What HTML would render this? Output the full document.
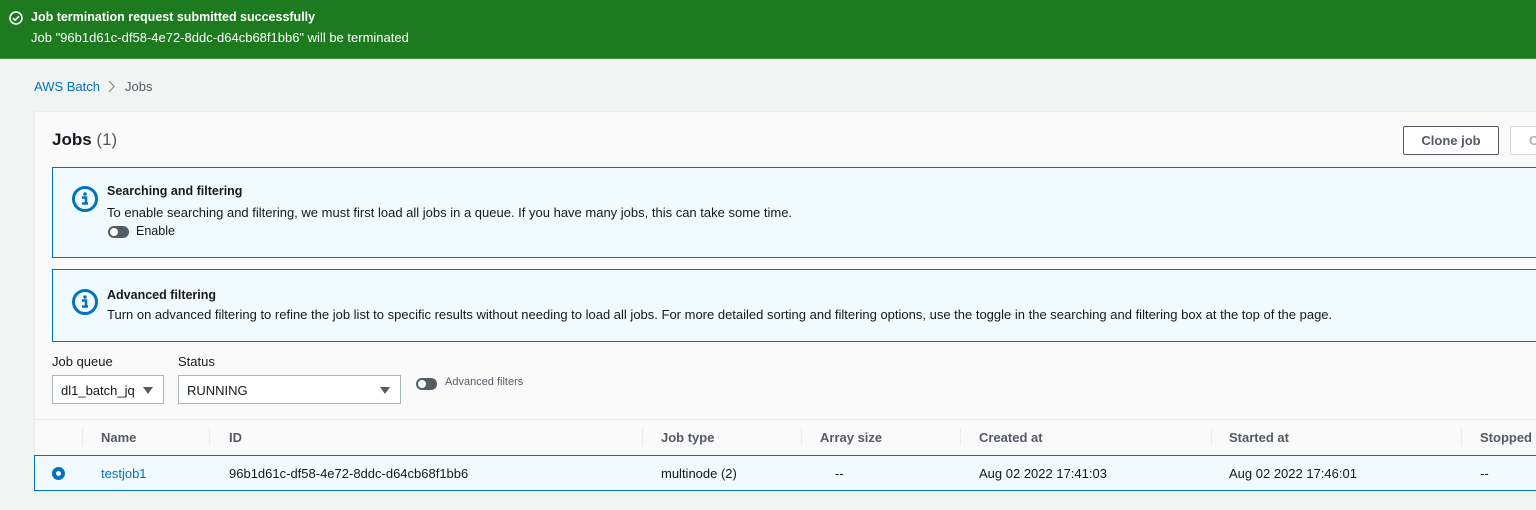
<!DOCTYPE html>
<html><head><meta charset="utf-8"><style>
*{box-sizing:border-box;margin:0;padding:0}
body{width:1536px;height:510px;overflow:hidden;background:#f2f3f3;font-family:"Liberation Sans",Arial,sans-serif;font-size:13px;color:#16191f;position:relative}
.abs{position:absolute;white-space:nowrap}
.banner{left:0;top:0;width:1536px;height:59px;background:#1d7a1f;color:#fff;border-bottom:1px solid #3f8f40}
.info{left:52px;width:1500px;background:#f1faff;border:1px solid #0073bb}
.sel{background:#fff;border:1px solid #aab7b8;height:29px;top:375px;font-size:13px;padding:7px 8px}
.tri{position:absolute;right:10px;top:11px;width:0;height:0;border-left:5px solid transparent;border-right:5px solid transparent;border-top:7px solid #545b64}
.tog{width:21px;height:12px;border-radius:6px;background:#545b64}
.tog:after{content:"";position:absolute;left:2px;top:2px;width:8px;height:8px;border-radius:50%;background:#fff}
.h{font-weight:bold;color:#545b64}
.sep{width:1px;height:18px;background:#eaeded;top:428px}
</style></head><body>
<div class="abs banner">
 <svg class="abs" style="left:9px;top:11px" width="14" height="14" viewBox="0 0 14 14"><circle cx="7" cy="7" r="6" fill="none" stroke="#fff" stroke-width="1.6"/><path d="M4 7.2l2 2 4-4" fill="none" stroke="#fff" stroke-width="1.6"/></svg>
 <div class="abs" style="left:31px;top:10px;font-weight:bold;font-size:12.5px">Job termination request submitted successfully</div>
 <div class="abs" style="left:31px;top:30px;font-size:13px">Job "96b1d61c-df58-4e72-8ddc-d64cb68f1bb6" will be terminated</div>
</div>
<div class="abs" style="left:34px;top:79px;color:#0073bb">AWS Batch</div>
<svg class="abs" style="left:108px;top:80px" width="8" height="13"><path d="M1 1l5 5.5L1 12" fill="none" stroke="#879596" stroke-width="1.3"/></svg>
<div class="abs" style="left:125px;top:79px;color:#545b64">Jobs</div>
<div class="abs" style="left:34px;top:111px;width:1520px;height:381px;background:#fafafa;border:1px solid #eaeded"></div>
<div class="abs" style="left:52px;top:130px;font-size:17px;font-weight:bold">Jobs <span style="font-weight:normal;color:#545b64">(1)</span></div>
<div class="abs" style="left:1403px;top:126px;width:96px;height:29px;border:1px solid #545b64;border-radius:2px;background:#fff;font-weight:bold;color:#545b64;text-align:center;line-height:27px">Clone job</div>
<div class="abs" style="left:1510px;top:126px;width:60px;height:29px;border:1px solid #d5dbdb;border-radius:2px;background:#fff;color:#aab7b8;font-weight:bold;line-height:27px;padding-left:18px">C</div>
<div class="abs info" style="top:167px;height:91px"></div>
<svg class="abs" style="left:71px;top:185px" width="28" height="28" viewBox="0 0 28 28"><circle cx="14" cy="14" r="11.5" fill="none" stroke="#0073bb" stroke-width="3"/><circle cx="14" cy="9" r="1.8" fill="#0073bb"/><path d="M11 12.5h4v6h2M11 18.5h6" stroke="#0073bb" stroke-width="2.5" fill="none"/></svg>
<div class="abs" style="left:107px;top:184px;font-weight:bold;font-size:12.5px">Searching and filtering</div>
<div class="abs" style="left:107px;top:205px;font-size:13px">To enable searching and filtering, we must first load all jobs in a queue. If you have many jobs, this can take some time.</div>
<div class="abs tog" style="left:108px;top:226px"></div>
<div class="abs" style="left:136px;top:224px;font-size:12.5px">Enable</div>
<div class="abs info" style="top:269px;height:73px"></div>
<svg class="abs" style="left:71px;top:288px" width="28" height="28" viewBox="0 0 28 28"><circle cx="14" cy="14" r="11.5" fill="none" stroke="#0073bb" stroke-width="3"/><circle cx="14" cy="9" r="1.8" fill="#0073bb"/><path d="M11 12.5h4v6h2M11 18.5h6" stroke="#0073bb" stroke-width="2.5" fill="none"/></svg>
<div class="abs" style="left:107px;top:288px;font-weight:bold;font-size:12.5px">Advanced filtering</div>
<div class="abs" style="left:107px;top:307px;font-size:13px">Turn on advanced filtering to refine the job list to specific results without needing to load all jobs. For more detailed sorting and filtering options, use the toggle in the searching and filtering box at the top of the page.</div>
<div class="abs" style="left:52px;top:354px">Job queue</div>
<div class="abs" style="left:178px;top:354px">Status</div>
<div class="abs sel" style="left:52px;width:112px">dl1_batch_jq<div class="tri"></div></div>
<div class="abs sel" style="left:178px;width:223px">RUNNING<div class="tri"></div></div>
<div class="abs tog" style="left:416px;top:378px"></div>
<div class="abs" style="left:445px;top:376px;font-size:11px;color:#545b64">Advanced filters</div>
<div class="abs" style="left:35px;top:419px;width:1501px;height:1px;background:#eaeded"></div>
<div class="abs sep" style="left:82px"></div><div class="abs sep" style="left:209px"></div><div class="abs sep" style="left:642px"></div><div class="abs sep" style="left:801px"></div><div class="abs sep" style="left:960px"></div><div class="abs sep" style="left:1211px"></div><div class="abs sep" style="left:1461px"></div>
<div class="abs h" style="left:101px;top:430px">Name</div>
<div class="abs h" style="left:229px;top:430px">ID</div>
<div class="abs h" style="left:661px;top:430px">Job type</div>
<div class="abs h" style="left:820px;top:430px">Array size</div>
<div class="abs h" style="left:979px;top:430px">Created at</div>
<div class="abs h" style="left:1229px;top:430px">Started at</div>
<div class="abs h" style="left:1480px;top:430px">Stopped at</div>
<div class="abs" style="left:34px;top:455px;width:1520px;height:36px;background:#f1faff;border:1px solid #0073bb"></div>
<div class="abs" style="left:52px;top:467px;width:13px;height:13px;border-radius:50%;border:4px solid #0073bb;background:#fff"></div>
<div class="abs" style="left:101px;top:466px;color:#0073bb">testjob1</div>
<div class="abs" style="left:229px;top:466px">96b1d61c-df58-4e72-8ddc-d64cb68f1bb6</div>
<div class="abs" style="left:661px;top:466px">multinode (2)</div>
<div class="abs" style="left:835px;top:466px">--</div>
<div class="abs" style="left:979px;top:466px">Aug 02 2022 17:41:03</div>
<div class="abs" style="left:1229px;top:466px">Aug 02 2022 17:46:01</div>
<div class="abs" style="left:1480px;top:466px">--</div>
</body></html>
